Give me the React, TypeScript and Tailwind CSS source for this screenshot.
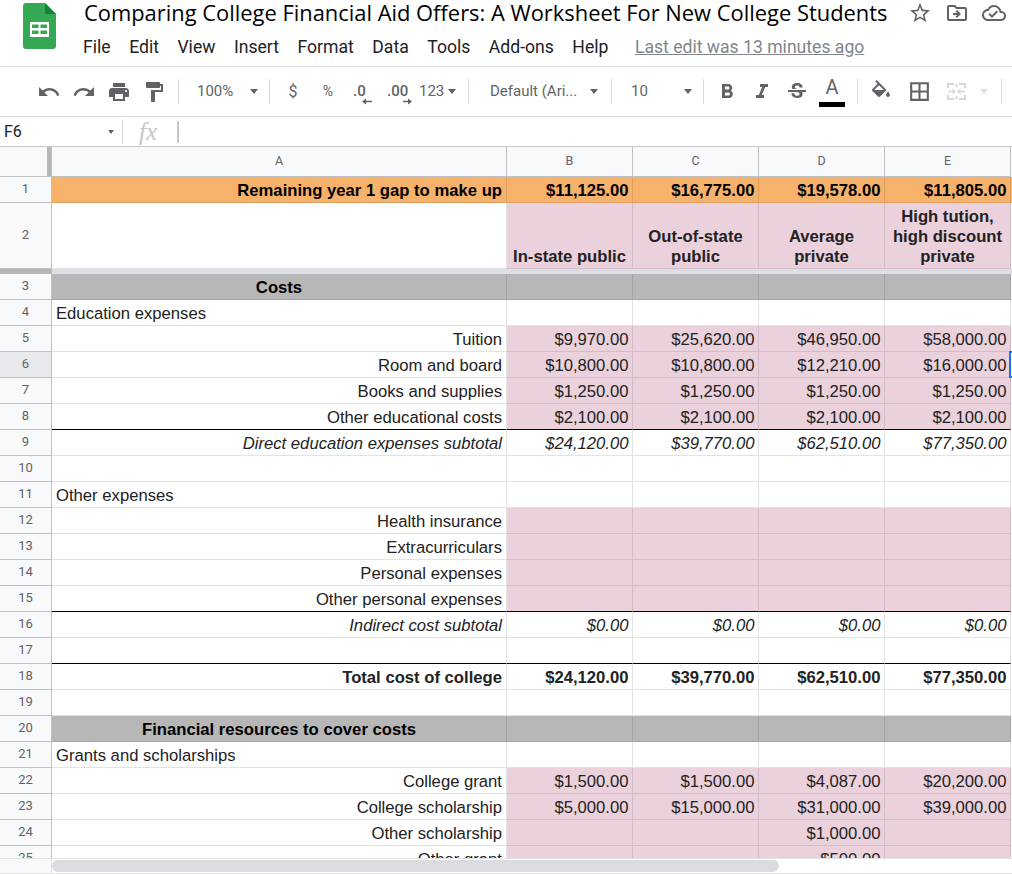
import {
  MdUndo,
  MdRedo,
  MdPrint,
  MdFormatPaint,
  MdFormatBold,
  MdFormatItalic,
  MdStrikethroughS,
  MdBorderAll,
  MdStarBorder,
  MdOutlineDriveFileMove,
  MdOutlineCloudDone,
} from "react-icons/md";

type RowData = {
  n: number;
  a?: string;
  v?: string[];
  align?: "left" | "right" | "center";
  style?: "bold" | "italic";
  tone?: "orange" | "gray" | "pink" | "white";
  black?: boolean;
  selected?: boolean;
};

const rows: RowData[] = [
  { n: 3, a: "Costs", align: "center", style: "bold", tone: "gray" },
  { n: 4, a: "Education expenses", align: "left" },
  { n: 5, a: "Tuition", v: ["$9,970.00", "$25,620.00", "$46,950.00", "$58,000.00"], tone: "pink" },
  { n: 6, a: "Room and board", v: ["$10,800.00", "$10,800.00", "$12,210.00", "$16,000.00"], tone: "pink", selected: true },
  { n: 7, a: "Books and supplies", v: ["$1,250.00", "$1,250.00", "$1,250.00", "$1,250.00"], tone: "pink" },
  { n: 8, a: "Other educational costs", v: ["$2,100.00", "$2,100.00", "$2,100.00", "$2,100.00"], tone: "pink", black: true },
  { n: 9, a: "Direct education expenses subtotal", v: ["$24,120.00", "$39,770.00", "$62,510.00", "$77,350.00"], style: "italic" },
  { n: 10 },
  { n: 11, a: "Other expenses", align: "left" },
  { n: 12, a: "Health insurance", tone: "pink" },
  { n: 13, a: "Extracurriculars", tone: "pink" },
  { n: 14, a: "Personal expenses", tone: "pink" },
  { n: 15, a: "Other personal expenses", tone: "pink", black: true },
  { n: 16, a: "Indirect cost subtotal", v: ["$0.00", "$0.00", "$0.00", "$0.00"], style: "italic" },
  { n: 17, black: true },
  { n: 18, a: "Total cost of college", v: ["$24,120.00", "$39,770.00", "$62,510.00", "$77,350.00"], style: "bold" },
  { n: 19 },
  { n: 20, a: "Financial resources to cover costs", align: "center", style: "bold", tone: "gray" },
  { n: 21, a: "Grants and scholarships", align: "left" },
  { n: 22, a: "College grant", v: ["$1,500.00", "$1,500.00", "$4,087.00", "$20,200.00"], tone: "pink" },
  { n: 23, a: "College scholarship", v: ["$5,000.00", "$15,000.00", "$31,000.00", "$39,000.00"], tone: "pink" },
  { n: 24, a: "Other scholarship", v: ["", "", "$1,000.00", ""], tone: "pink" },
  { n: 25, a: "Other grant", v: ["", "", "$500.00", ""], tone: "pink" },
];

const gridCols = "grid grid-cols-[52px_455px_126px_126px_126px_126px_1px]";

const toneClass = {
  white: "bg-white border-[#e2e3e3]",
  pink: "bg-[#ead1dc] border-[#d3bcc6]",
  gray: "bg-[#b7b7b7] border-[#a5a5a5]",
  orange: "bg-[#f6b26b] border-[#dda060]",
};

const menus = ["File", "Edit", "View", "Insert", "Format", "Data", "Tools", "Add-ons", "Help"];

function Sep() {
  return <div className="w-px h-[25px] bg-[#dadce0]" />;
}

function Caret({ light }: { light?: boolean }) {
  return (
    <div
      className={`w-0 h-0 mx-[1px] border-x-[4px] border-x-transparent border-t-[5px] ${
        light ? "border-t-[#dadce0]" : "border-t-[#5f6368]"
      }`}
    />
  );
}

function CaretSlot({ light }: { light?: boolean }) {
  return (
    <div className="w-[10px] flex justify-center">
      <Caret light={light} />
    </div>
  );
}

function Toolbar() {
  const icon = "text-[#5f6368] text-[24px]";
  return (
    <div className="h-[49px] border-b border-[#dadce0] flex items-center pl-[32px] font-['Roboto',sans-serif] text-[15px] text-[#5f6368] box-content shrink-0">
      <div className="w-[34px] flex justify-center"><MdUndo className={icon} /></div>
      <div className="w-[36px] flex justify-center"><MdRedo className={icon} /></div>
      <div className="w-[34px] flex justify-center"><MdPrint className={icon} /></div>
      <div className="w-[36px] flex justify-center"><MdFormatPaint className={icon} /></div>
      <div className="w-[6px]" />
      <Sep />
      <div className="w-[70px] pl-[18px]">100%</div>
      <CaretSlot />
      <div className="w-[10px]" />
      <Sep />
      <div className="w-[46px] text-center text-[16px]">$</div>
      <div className="w-[24px] text-center text-[14px]">%</div>
      <div className="w-[42px] pl-[13px] relative font-medium">
        .0
        <svg width="11" height="7" viewBox="0 0 11 7" className="absolute top-[18px] left-[22px]">
          <path d="M0 3.5 L4 0.5 V2.7 H10 V4.3 H4 V6.5 Z" fill="#5f6368" />
        </svg>
      </div>
      <div className="w-[30px] pl-[5px] relative font-medium">
        .00
        <svg width="9" height="7" viewBox="0 0 9 7" className="absolute top-[18px] left-[21px]">
          <path d="M9 3.5 L5 0.5 V2.7 H0 V4.3 H5 V6.5 Z" fill="#5f6368" />
        </svg>
      </div>
      <div className="w-[34px] pl-[7px]">123</div>
      <div className="w-px" />
      <CaretSlot />
      <div className="w-[11px]" />
      <Sep />
      <div className="w-[112px] pl-[21px] whitespace-nowrap">Default (Ari...</div>
      <div className="w-[8px]" />
      <CaretSlot />
      <div className="w-[12px]" />
      <Sep />
      <div className="w-[71px] pl-[19px]">10</div>
      <CaretSlot />
      <div className="w-[10px]" />
      <Sep />
      <div className="w-[46px] flex justify-center"><MdFormatBold className={icon} /></div>
      <div className="w-[24px] flex justify-center"><MdFormatItalic className={icon} /></div>
      <div className="w-[46px] flex justify-center"><MdStrikethroughS className={icon} /></div>
      <div className="w-[24px] flex flex-col items-center">
        <span className="text-[20px] leading-[20px]">A</span>
        <div className="w-[26px] h-[5px] bg-black mt-[5px] shrink-0" />
      </div>
      <div className="w-[13px]" />
      <Sep />
      <div className="w-[46px] flex justify-center">
        <svg width="24" height="24" viewBox="0 0 24 24" fill="#5f6368">
          <path d="M16.56 8.94L7.62 0 6.21 1.41l2.38 2.38-5.15 5.15c-.59.59-.59 1.54 0 2.12l5.5 5.5c.29.29.68.44 1.06.44s.77-.15 1.06-.44l5.5-5.5c.59-.58.59-1.53 0-2.11zM5.21 10L10 5.21 14.79 10H5.21zM19 11.5s-2 2.17-2 3.5c0 1.1.9 2 2 2s2-.9 2-2c0-1.33-2-3.5-2-3.5z" />
        </svg>
      </div>
      <div className="w-[30px] flex justify-center"><MdBorderAll className="text-[#5f6368] text-[25px]" /></div>
      <div className="w-[45px] flex justify-center">
        <svg width="19" height="17" viewBox="0 0 19 17" fill="#d5d7da">
          <path d="M0 0h7v2H0zM12 0h7v2h-7zM0 2h2v3H0zM17 2h2v3h-2zM0 15h7v2H0zM12 15h7v2h-7zM0 12h2v3H0zM17 12h2v3h-2zM8.5 1h2v3h-2zM8.5 13h2v3h-2zM1 7.7h4.5V5.5L9 8.5l-3.5 3V9.3H1zM18 7.7h-4.5V5.5L10 8.5l3.5 3V9.3H18z" />
        </svg>
      </div>
      <CaretSlot light />
      <div className="w-[12px]" />
      <Sep />
    </div>
  );
}

function Cell({
  tone,
  black,
  align,
  style,
  className,
  children,
}: {
  tone: keyof typeof toneClass;
  black?: boolean;
  align?: "left" | "right" | "center" | "value";
  style?: "bold" | "italic";
  className?: string;
  children?: React.ReactNode;
}) {
  const alignClass =
    align === "left"
      ? "justify-start pl-[4px]"
      : align === "center"
        ? "justify-center"
        : align === "value"
          ? "justify-end pr-[3.5px]"
          : "justify-end pr-[4px]";
  return (
    <div
      className={`flex items-end overflow-hidden whitespace-nowrap border-r border-b pb-[1px] ${toneClass[tone]} ${
        black ? "border-b-black" : ""
      } ${alignClass} ${style === "bold" ? "font-bold" : style === "italic" ? "italic" : ""} ${className ?? ""}`}
    >
      {children}
    </div>
  );
}

function RowHead({ n, selected }: { n: number; selected?: boolean }) {
  return (
    <div
      className={`flex items-center justify-center border-r border-b border-[#c0c0c0] pb-[1px] font-['Roboto',sans-serif] text-[13px] text-[#5f6368] ${
        selected ? "bg-[#e8eaed]" : "bg-[#f8f9fa]"
      }`}
    >
      {n}
    </div>
  );
}

export default function App() {
  return (
    <div className="w-[1012px] h-[874px] overflow-hidden bg-white flex flex-col font-['Roboto',sans-serif]">
      <div className="h-[67px] border-b border-[#dadce0] flex shrink-0">
        <div className="w-[84px] shrink-0 pl-[23px] pt-[3px]">
          <svg width="33" height="46" viewBox="0 0 33 46">
            <path d="M3 0h19l11 11v32a3 3 0 0 1-3 3H3a3 3 0 0 1-3-3V3a3 3 0 0 1 3-3z" fill="#34a853" />
            <path d="M22 0l11 11H22z" fill="#188038" />
            <path d="M7 19h19v15H7z" fill="#fff" />
            <path d="M9 21.5h6.5v3.5H9zM17.5 21.5H24v3.5h-6.5zM9 27.5h6.5V31H9zM17.5 27.5H24V31h-6.5z" fill="#34a853" />
          </svg>
        </div>
        <div className="flex-1">
          <div className="h-[26px] flex items-center">
            <h1 className="w-[818px] shrink-0 font-['Open_Sans',sans-serif] text-[21.9px] leading-[26px] text-black whitespace-nowrap">
              Comparing College Financial Aid Offers: A Worksheet For New College Students
            </h1>
            <div className="w-[36px] shrink-0 flex justify-center"><MdStarBorder className="text-[#5f6368] text-[24px]" /></div>
            <div className="w-[38px] shrink-0 flex justify-center"><MdOutlineDriveFileMove className="text-[#5f6368] text-[24px]" /></div>
            <div className="w-[36px] shrink-0 flex justify-center"><MdOutlineCloudDone className="text-[#5f6368] text-[24px]" /></div>
          </div>
          <div className="flex items-center gap-[18.5px] -ml-[1px] pt-[9px] text-[17.6px] leading-[24px] text-[#202124] whitespace-nowrap">
            {menus.map((m) => (
              <span key={m}>{m}</span>
            ))}
            <span className="ml-[8px] text-[#80868b] underline">Last edit was 13 minutes ago</span>
          </div>
        </div>
      </div>

      <Toolbar />

      <div className="h-[30px] border-b border-[#c7c7c7] flex items-center shrink-0">
        <div className="w-[122px] flex items-center pl-[4px] pr-[8px] justify-between text-[16px] text-[#202124]">
          <span>F6</span>
          <div className="w-0 h-0 border-x-[3.5px] border-x-transparent border-t-[4px] border-t-[#5f6368]" />
        </div>
        <div className="w-px h-[25px] bg-[#dadce0]" />
        <span className="ml-[16px] w-[38px] font-['Liberation_Serif',serif] italic text-[25px] leading-[28px] text-[#c4c7c5]">fx</span>
        <div className="w-[2px] h-[22px] bg-[#c7c7c7]" />
      </div>

      <div className="flex-1 overflow-hidden font-['Liberation_Sans',Arial,sans-serif] text-[16.67px] leading-[20px] text-[#222222] min-h-0">
        <div className={`${gridCols} h-[30px] bg-[#f8f9fa] font-['Roboto',sans-serif] text-[12.5px] text-[#5f6368]`}>
          <div className="border-r border-b border-[#c0c0c0] flex justify-end">
            <div className="w-[4px] h-full bg-[#b7b7b7]" />
          </div>
          {["A", "B", "C", "D", "E"].map((c) => (
            <div key={c} className="border-r border-b border-[#c0c0c0] pb-[1px] flex items-center justify-center">
              {c}
            </div>
          ))}
        </div>

        <div className={`${gridCols} h-[26px]`}>
          <RowHead n={1} />
          <Cell tone="orange" style="bold" className="text-black">Remaining year 1 gap to make up</Cell>
          {["$11,125.00", "$16,775.00", "$19,578.00", "$11,805.00"].map((v) => (
            <Cell key={v} tone="orange" style="bold" align="value" className="text-black">{v}</Cell>
          ))}
          <div className="bg-[#f6b26b]" />
        </div>

        <div className={`${gridCols} h-[66px]`}>
          <RowHead n={2} />
          <Cell tone="white" />
          {["In-state public", "Out-of-state public", "Average private", "High tution, high discount private"].map((v) => (
            <Cell key={v} tone="pink" style="bold" align="center" className="text-center">
              <span className="block w-[116px] whitespace-normal">{v}</span>
            </Cell>
          ))}
          <div />
        </div>

        <div className="h-[5px] flex">
          <div className="w-[52px] bg-[#b7b7b7]" />
          <div className="flex-1 bg-[#dadfe8]" />
        </div>

        {rows.map((r) => {
          const tone = r.tone ?? "white";
          const aTone = tone === "pink" ? "white" : tone;
          const vals = r.v ?? ["", "", "", ""];
          return (
            <div key={r.n} className={`${gridCols} h-[26px]`}>
              <RowHead n={r.n} selected={r.selected} />
              <Cell tone={aTone} black={r.black} align={r.align} style={r.style} className={tone === "gray" ? "text-black" : ""}>
                {r.a}
              </Cell>
              {vals.map((v, i) => (
                <Cell key={i} tone={tone} black={r.black} style={r.style} align="value">
                  {v}
                </Cell>
              ))}
              <div className="relative">
                {r.selected && (
                  <div className="absolute -left-[2px] -top-px h-[27px] w-[4px] border-2 border-r-0 border-[#1a73e8]" />
                )}
              </div>
            </div>
          );
        })}
      </div>

      <div className="h-[16px] shrink-0 border-t border-b border-[#e2e3e3] flex">
        <div className="w-[52px] bg-[#f8f9fa] border-r border-[#e2e3e3]" />
        <div className="flex-1 flex items-center">
          <div className="w-[727px] h-[12px] rounded-full bg-[#dadce0]" />
        </div>
      </div>
    </div>
  );
}
